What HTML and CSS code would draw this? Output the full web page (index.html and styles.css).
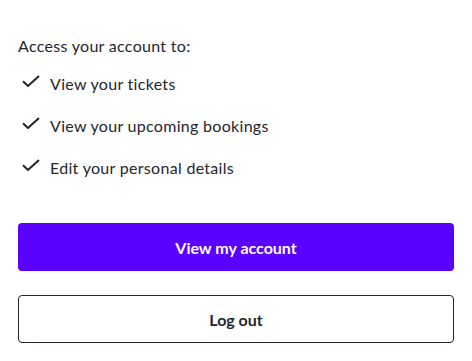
FILE: index.html
```html
<!DOCTYPE html>
<html lang="en">
<head>
<meta charset="utf-8">
<link rel="stylesheet" href="styles.css">
</head>
<body>
<div class="panel">
  <p class="intro">Access your account to:</p>
  <ul class="benefits">
    <li><svg class="check" viewBox="0 0 18 12" width="18" height="12"><path d="M1 6.2 L6 11 L17 1" fill="none" stroke="#1f262d" stroke-width="2"/></svg><span>View your tickets</span></li>
    <li><svg class="check" viewBox="0 0 18 12" width="18" height="12"><path d="M1 6.2 L6 11 L17 1" fill="none" stroke="#1f262d" stroke-width="2"/></svg><span>View your upcoming bookings</span></li>
    <li><svg class="check" viewBox="0 0 18 12" width="18" height="12"><path d="M1 6.2 L6 11 L17 1" fill="none" stroke="#1f262d" stroke-width="2"/></svg><span>Edit your personal details</span></li>
  </ul>
  <div class="actions">
    <a class="btn btn-primary" href="#">View my account</a>
    <a class="btn btn-secondary" href="#">Log out</a>
  </div>
</div>
</body>
</html>
```

FILE: styles.css
```css
html, body {
  margin: 0;
  padding: 0;
  background: #ffffff;
}
body {
  font-family: Lato, "Noto Sans", sans-serif;
  color: #1f262d;
}
.panel {
  padding: 36px 18px 0 18px;
}
.intro {
  margin: 0;
  font-size: 16px;
  line-height: 20px;
  letter-spacing: 0.3px;
}
.benefits {
  list-style: none;
  margin: 0;
  padding: 0;
  margin-top: 18px;
  display: flex;
  flex-direction: column;
  gap: 22px;
}
.benefits li {
  display: flex;
  align-items: center;
  gap: 10px;
  font-size: 16px;
  line-height: 20px;
  letter-spacing: 0.3px;
}
.check {
  flex: none;
  margin-left: 4px;
  margin-top: -6px;
}
.actions {
  margin-top: 45px;
  display: flex;
  flex-direction: column;
  gap: 24px;
}
.btn {
  display: flex;
  align-items: center;
  justify-content: center;
  height: 48px;
  box-sizing: border-box;
  border-radius: 4px;
  font-size: 16px;
  font-weight: 700;
  text-decoration: none;
}
.btn-primary {
  background: #5a00ff;
  color: #ffffff;
}
.btn-secondary {
  background: #ffffff;
  color: #1f262d;
  border: 1px solid #1f262d;
}
```
